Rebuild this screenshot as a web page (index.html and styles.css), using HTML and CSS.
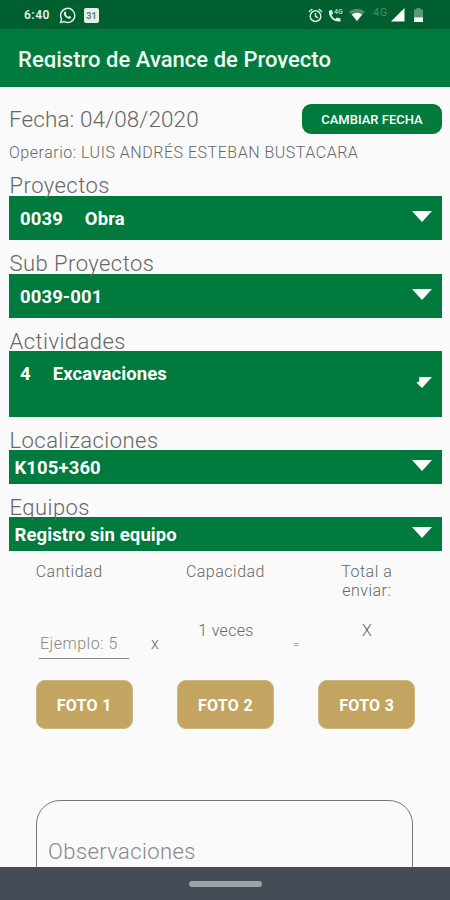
FILE: index.html
```html
<!DOCTYPE html>
<html lang="es">
<head>
<meta charset="utf-8">
<title>Registro de Avance de Proyecto</title>
<link rel="stylesheet" href="styles.css">
</head>
<body>
<div class="screen">
  <header class="status">
    <span class="clock">6:40</span>
    <svg class="whatsapp" width="17" height="17" viewBox="0 0 24 24"><path fill="none" stroke="#e4f0e8" stroke-width="2" d="M2.2 22l1.4-5.2A10 10 0 1 1 7.4 20.6z"/><path fill="#e4f0e8" d="M8 6.6c.6-.5 1.200-.4 1.500.2l.8 1.900c.2.6-.8 1.300-.7 1.700.7 1.500 2 2.700 3.600 3.300.5.200 1.100-1.200 1.700-1.100l2 1c.5.300.3 1.500-.1 2-1.800 2-4.800.8-7-1.100C7.600 12.600 5.600 9 8 6.600z"/></svg>
    <span class="calendar">31</span>
    <div class="indicators">
      <svg width="15" height="15" viewBox="0 0 24 24"><g fill="none" stroke="#dcebe1" stroke-width="2.300"><circle cx="12" cy="13" r="8.500"/><path d="M12 8v5.500l4 2.300M1.500 6L7 1.500M22.500 6L17 1.500"/></g></svg>
      <svg class="call" width="16" height="15" viewBox="0 0 16 15"><path fill="#e4f0e8" d="M1 2.500L4 2l1 3.500-1.500 1.400c.9 2 2 3.100 4 4L9 9.400l3.500 1v3C6 14.500 0 9 1 2.500z"/><text class="tiny" x="6" y="6">4G</text></svg>
      <svg class="wifi" width="16" height="14" viewBox="0 0 16 14"><path fill="#4d8f69" d="M0 3.500Q8-2 16 3.500L8 13z"/><path fill="#fff" d="M2.800 6.500Q8 2.800 13.200 6.500L8 13z"/></svg>
      <span class="network">4G</span>
      <svg class="signal" width="14" height="14" viewBox="0 0 14 14"><path fill="#fff" d="M13.500 0v13.500H0z"/></svg>
      <svg class="battery" width="9" height="14" viewBox="0 0 9 14"><path fill="#5c9a75" d="M2.500 0h4v1.500H9V10H0V1.500h2.500z"/><path fill="#fff" d="M0 9.500h9V14H0z"/></svg>
    </div>
  </header>
  <div class="appbar"><h1 class="title">Registro de Avance de Proyecto</h1></div>
  <main class="content">
    <div class="daterow">
      <span class="date">Fecha: 04/08/2020</span>
      <button class="change">CAMBIAR FECHA</button>
    </div>
    <div class="operator">Operario: LUIS ANDRÉS ESTEBAN BUSTACARA</div>

    <div class="label projects">Proyectos</div>
    <div class="select"><span>0039</span><span class="code-name">Obra</span><i class="arrow"></i></div>
    <div class="label">Sub Proyectos</div>
    <div class="select"><span>0039-001</span><i class="arrow"></i></div>
    <div class="label activities">Actividades</div>
    <div class="select tall"><span>4</span><span class="code-name">Excavaciones</span><i class="arrow clipped"></i></div>
    <div class="label locations">Localizaciones</div>
    <div class="select short"><span>K105+360</span><i class="arrow"></i></div>
    <div class="label equipment">Equipos</div>
    <div class="select short"><span>Registro sin equipo</span><i class="arrow"></i></div>

    <div class="grid headings">
      <div class="quantity">Cantidad</div><div>Capacidad</div><div>Total a<br>enviar:</div>
    </div>
    <div class="values">
      <div class="field">Ejemplo: 5</div>
      <div class="times">x</div>
      <div class="capacity">1 veces</div>
      <div class="equals">=</div>
      <div class="total">X</div>
    </div>
    <div class="grid photos">
      <button class="photo">FOTO 1</button><button class="photo">FOTO 2</button><button class="photo">FOTO 3</button>
    </div>
    <div class="notes">Observaciones</div>
  </main>
  <footer class="navbar"><div class="handle"></div></footer>
</div>
</body>
</html>
```
FILE: styles.css
```css
* { box-sizing: border-box; }
body { margin: 0; background: #fafafa; color: #666; font-family: Roboto, sans-serif; }
button { border: 0; padding: 0; font-family: inherit; color: #fff; }
svg { display: block; }
.screen { width: 450px; height: 900px; overflow: hidden; display: flex; flex-direction: column; }
.status { height: 29px; flex: none; display: flex; align-items: center; padding: 1px 26px 0 24px; background: #005f2e; color: #e4f0e8; }
.clock { width: 35px; font-size: 12px; font-weight: 600; letter-spacing: .5px; }
.calendar { width: 15px; height: 15px; margin-left: 8px; background: #e4f0e8; border-radius: 2px; color: #53866a; font-size: 9px; line-height: 16px; font-weight: 700; text-align: center; }
.indicators { margin-left: auto; display: flex; align-items: center; }
.call { margin-left: 5px; }
.tiny { font-size: 7px; font-weight: 700; fill: #a9cdb8; }
.wifi { margin-left: 5px; }
.network { width: 18px; margin: -5px 0 0 8px; font-size: 11px; color: #4d8d68; letter-spacing: .5px; }
.battery { margin: 0 1px 0 9px; }
.appbar { height: 58px; flex: none; padding: 18px 18px 0; background: #007a3d; }
.title { height: 21px; margin: 0; overflow: hidden; color: #f0f8f2; font-size: 22px; line-height: 25px; font-weight: 500; white-space: nowrap; letter-spacing: .03px; }
.content { flex: 1; min-height: 0; overflow: hidden; padding: 17px 8px 0 9px; }
.daterow { height: 31px; display: flex; justify-content: space-between; }
.date { font-size: 22.5px; line-height: 31px; font-weight: 300; letter-spacing: .1px; }
.change { width: 140px; height: 30px; border-radius: 9px; background: #007a3d; font-size: 13px; font-weight: 500; }
.operator { height: 38px; line-height: 36px; font-size: 16px; font-weight: 300; letter-spacing: .52px; white-space: nowrap; }
.label { height: 34px; padding: 10px 0 0 .5px; line-height: 27px; font-size: 22px; font-weight: 300; letter-spacing: .45px; white-space: nowrap; }
.projects { height: 23px; padding-top: 0; line-height: 26px; }
.activities { height: 33px; }
.locations { height: 33px; }
.equipment { height: 33px; }
.select { height: 44px; width: 433px; display: flex; align-items: center; padding: 1px 10px 0 11px; background: #007a3d; color: #fff; font-size: 18.500px; line-height: 22px; font-weight: 700; letter-spacing: .1px; white-space: nowrap; }
.code-name { margin-left: 22px; }
.tall { height: 66px; align-items: flex-start; padding-top: 12px; }
.short { height: 34px; padding-left: 5.500px; }
.arrow { width: 20px; height: 11px; margin: 0 0 4px auto; background: #fff; clip-path: polygon(0 0, 100% 0, 50% 100%); }
.clipped { margin-top: 14px; clip-path: polygon(36% 0, 100% 0, 50% 100%, 22% 50%, 36% 42%); }
.grid { display: grid; grid-template-columns: repeat(3, 141.300px); margin-left: 4.500px; text-align: center; }
.headings { height: 71px; padding-top: 11px; font-size: 16px; line-height: 19px; font-weight: 300; letter-spacing: .5px; }
.quantity { padding-right: 30px; }
.values { display: grid; grid-template-columns: 90px 52px 90px 51px 90px; margin-left: 30px; height: 58px; font-size: 16px; text-align: center; line-height: 18px; font-weight: 300; letter-spacing: .3px; }
.field { height: 37px; padding: 13px 0 0 1px; border-bottom: 1px solid #888; text-align: left; color: #888; letter-spacing: .5px; }
.times { padding-top: 13px; }
.equals { padding-top: 14px; font-size: 11px; }
.photo { width: 97px; height: 49px; padding-top: 1px; border: 1px solid #c9b681; border-radius: 9px; justify-self: center; background: #c3a460; font-size: 16px; font-weight: 700; letter-spacing: .3px; }
.notes { width: 377px; height: 120px; margin: 71px 0 0 27px; padding: 37px 11px; border: 1px solid #777; border-radius: 24px; color: #888; font-size: 22px; line-height: 28px; font-weight: 300; letter-spacing: .4px; }
.navbar { height: 33px; flex: none; background: #444c56; padding-top: 14px; }
.handle { width: 73px; height: 6px; margin: 0 auto; border-radius: 3px; background: #9da2a7; }
```
